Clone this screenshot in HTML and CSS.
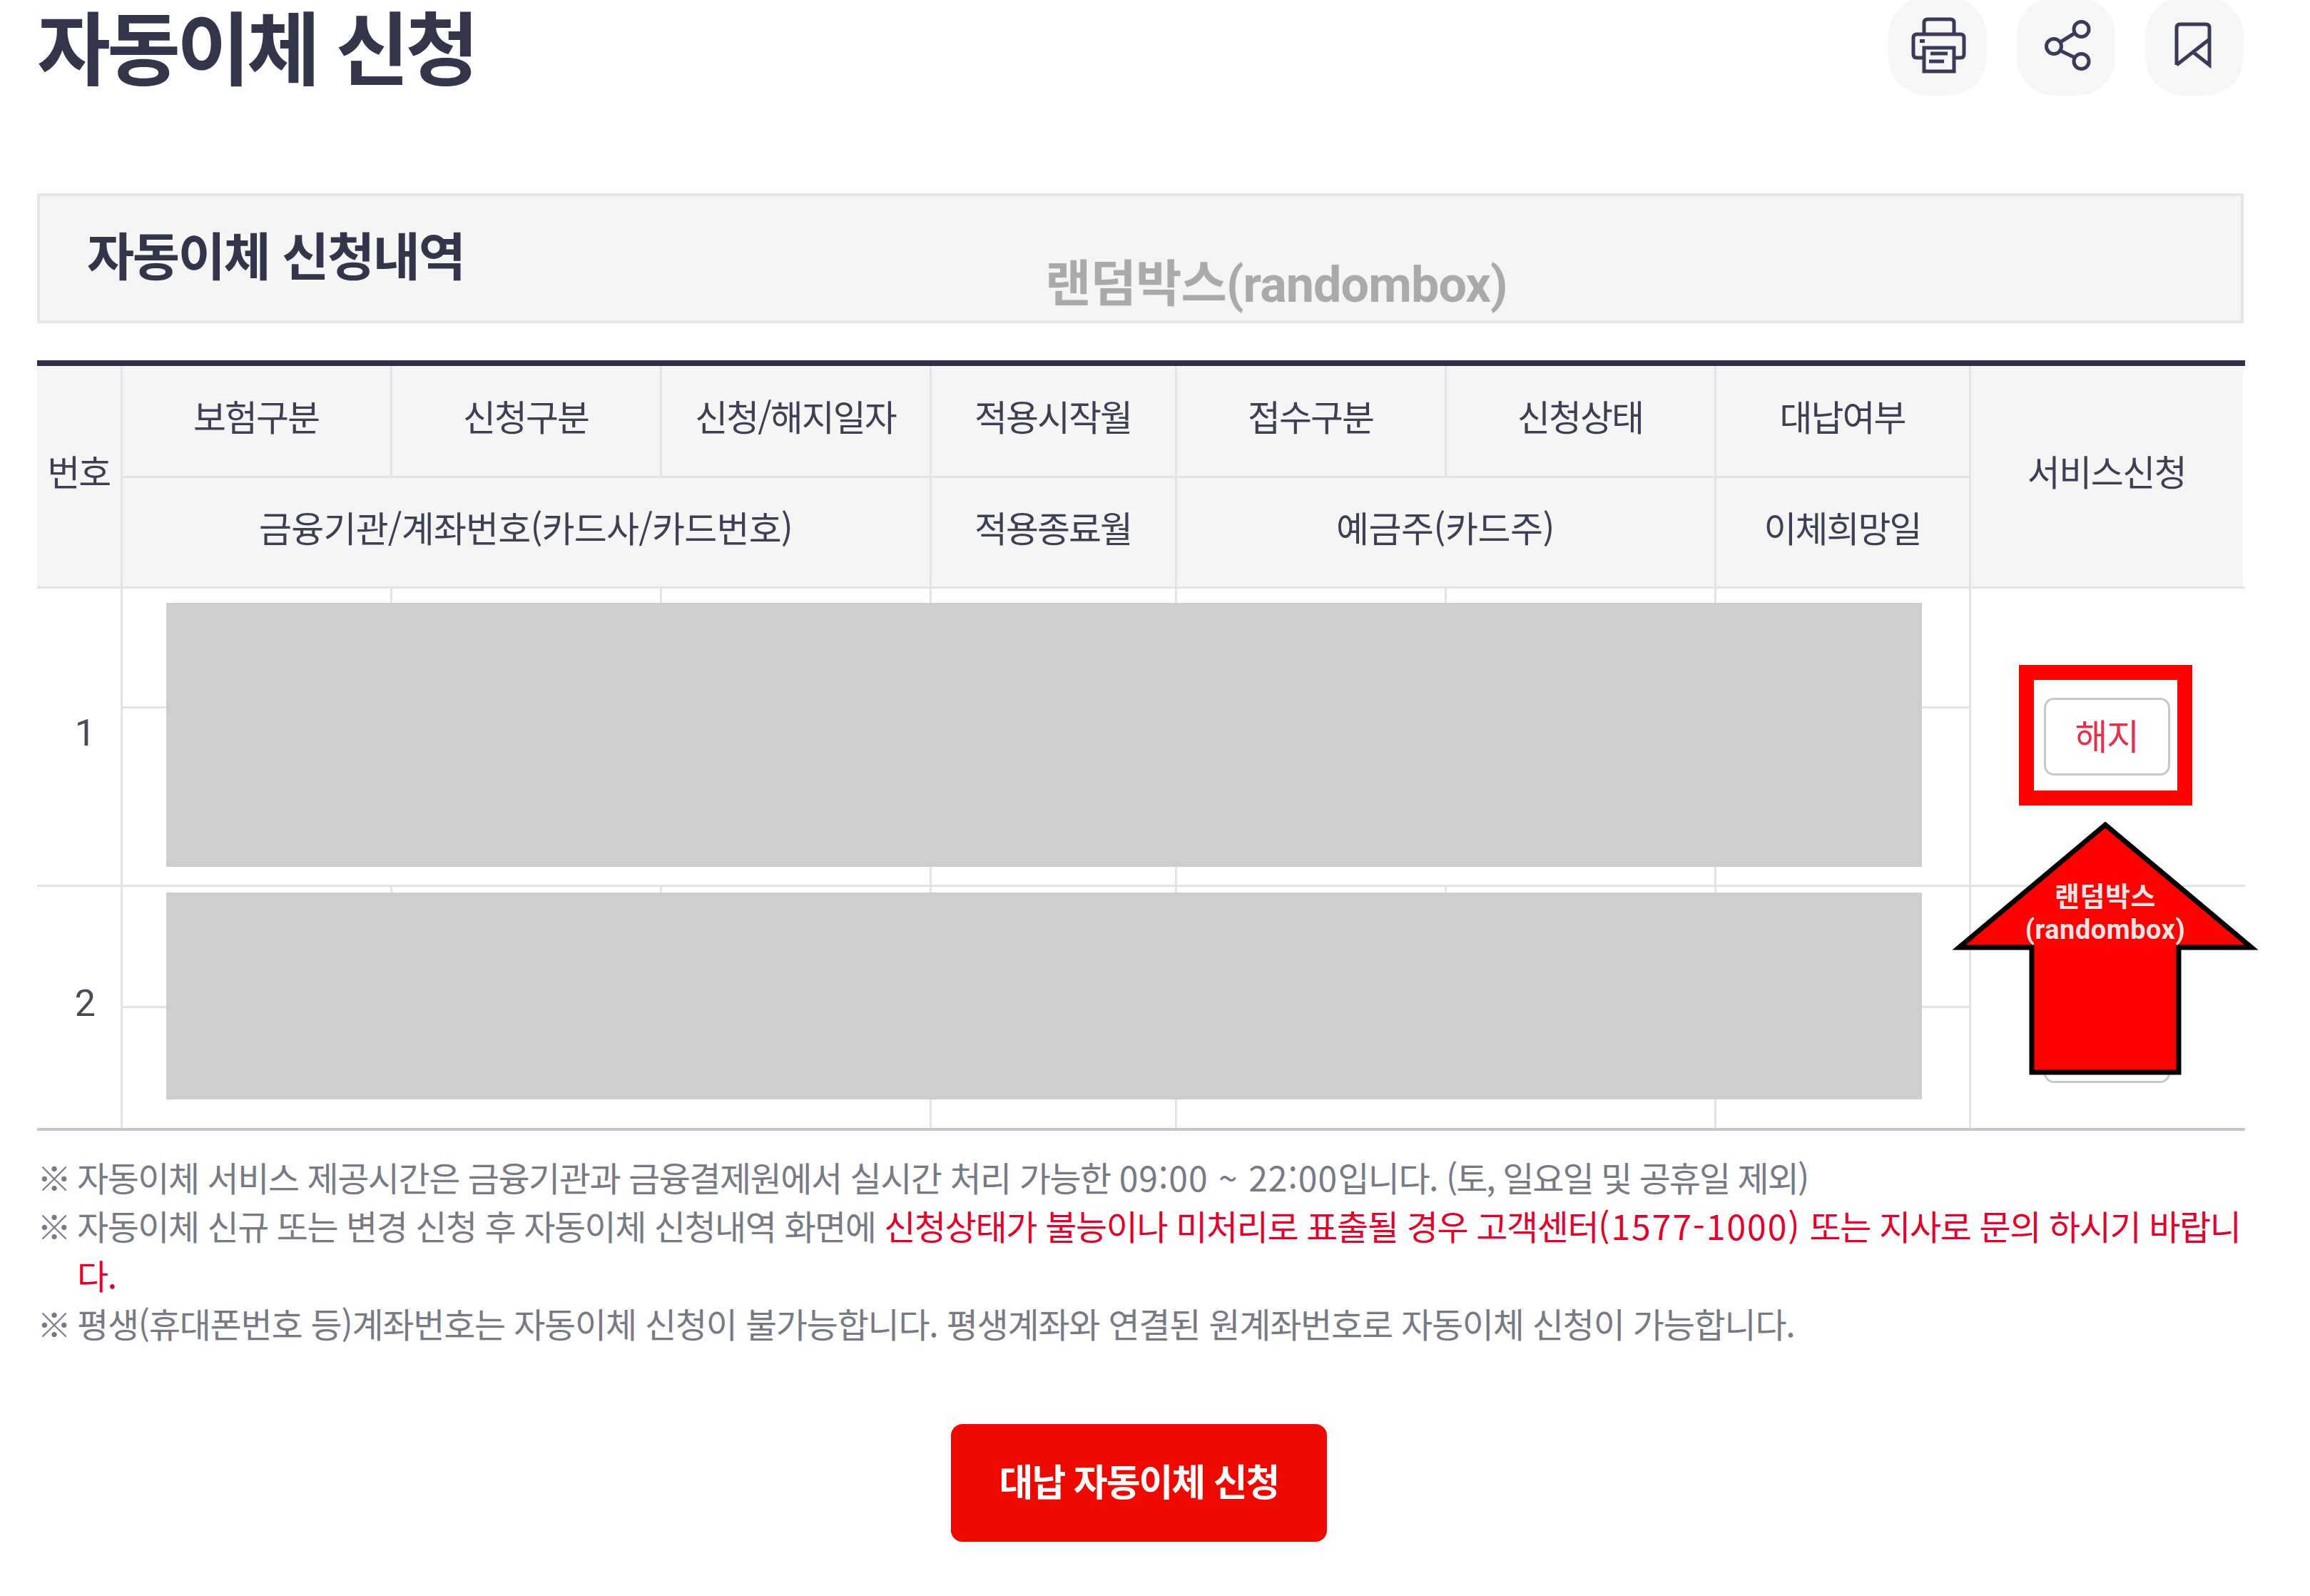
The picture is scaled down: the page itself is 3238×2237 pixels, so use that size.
FILE: index.html
```html
<!DOCTYPE html>
<html lang="ko">
<head>
<meta charset="utf-8">
<title>자동이체 신청</title>
<link rel="stylesheet" href="styles.css">
</head>
<body>
<main class="page">
  <header class="topbar">
    <h1 class="title">자동이체 신청</h1>
    <div class="tools">
      <button class="tool" aria-label="인쇄">
        <svg viewBox="-3 -3 138 138" class="ico">
          <path d="M47 47V33q0-5 5-5h32q5 0 5 5v14"/>
          <path d="M47 82H37q-5 0-5-5V54q0-5 5-5h61q5 0 5 5v23q0 5-5 5H89"/>
          <rect x="47" y="68" width="42" height="33"/>
          <path d="M56 76h24M54 87h21"/>
          <rect class="dot" x="41" y="56" width="7" height="5"/>
        </svg>
      </button>
      <button class="tool" aria-label="공유">
        <svg viewBox="-5 -2 138 138" class="ico">
          <circle cx="85.5" cy="43" r="10.5"/>
          <circle cx="47" cy="67" r="10.5"/>
          <circle cx="85.5" cy="88" r="10.5"/>
          <path d="M56 61l21-13M56 73l21 10"/>
        </svg>
      </button>
      <button class="tool" aria-label="즐겨찾기">
        <svg viewBox="-1 0 138 138" class="ico">
          <path d="M43 95V43q0-5 5-5h36q5 0 5 5v52L66 77"/>
          <path d="M43 95l46-36"/>
        </svg>
      </button>
    </div>
  </header>

  <section class="panel">
    <h2 class="panel-title">자동이체 신청내역</h2>
    <span class="mark">랜덤박스(randombox)</span>
  </section>

  <div class="table-wrap">
    <table class="grid">
      <colgroup>
        <col class="c-no"><col class="c-a"><col class="c-a"><col class="c-a"><col class="c-b"><col class="c-a"><col class="c-a"><col class="c-c"><col class="c-d">
      </colgroup>
      <thead>
        <tr class="h1">
          <th rowspan="2">번호</th>
          <th>보험구분</th><th>신청구분</th><th>신청/해지일자</th><th>적용시작월</th><th>접수구분</th><th>신청상태</th><th>대납여부</th>
          <th rowspan="2" class="last">서비스신청</th>
        </tr>
        <tr class="h2">
          <th colspan="3" class="wide">금융기관/계좌번호(카드사/카드번호)</th>
          <th>적용종료월</th>
          <th colspan="2" class="loose">예금주(카드주)</th>
          <th>이체희망일</th>
        </tr>
      </thead>
      <tbody>
        <tr class="r1a">
          <td rowspan="2" class="num">1</td>
          <td></td><td></td><td></td><td></td><td></td><td></td><td></td>
          <td rowspan="2" class="last"><button class="cancel">해지</button></td>
        </tr>
        <tr class="r1b">
          <td colspan="3"></td><td></td><td colspan="2"></td><td></td>
        </tr>
        <tr class="r2a">
          <td rowspan="2" class="num">2</td>
          <td></td><td></td><td></td><td></td><td></td><td></td><td></td>
          <td rowspan="2" class="last"><button class="cancel low">해지</button></td>
        </tr>
        <tr class="r2b">
          <td colspan="3"></td><td></td><td colspan="2"></td><td></td>
        </tr>
      </tbody>
    </table>
    <div class="mask mask-1"></div>
    <div class="mask mask-2"></div>
    <div class="focus"></div>
    <div class="arrow">
      <svg viewBox="0 0 434 372" class="arrow-shape"><path d="M217 16L422 188H320V363H114V188H12Z"/></svg>
      <p class="arrow-text">랜덤박스<br>(randombox)</p>
    </div>
  </div>

  <ul class="notes">
    <li><span class="ref">※</span><p>자동이체 서비스 제공시간은 금융기관과 금융결제원에서 실시간 처리 가능한 <span class="lat">09:00 ~ 22:00</span>입니다. <span class="tail">(토, 일요일 및 공휴일 제외)</span></p></li>
    <li><span class="ref">※</span><p>자동이체 신규 또는 변경 신청 후 자동이체 신청내역 화면에 <em>신청상태가 불능이나 미처리로 표출될 경우 고객센터<span class="tel">(1577-1000)</span> 또는 지사로 문의 하시기 바랍니<br>다.</em></p></li>
    <li class="snug"><span class="ref">※</span><p>평생(휴대폰번호 등)계좌번호는 자동이체 신청이 불가능합니다. 평생계좌와 연결된 원계좌번호로 자동이체 신청이 가능합니다.</p></li>
  </ul>

  <div class="actions"><button class="cta">대납 자동이체 신청</button></div>
</main>
</body>
</html>
```

FILE: styles.css
```css
* { box-sizing: border-box; }
html, body { margin: 0; padding: 0; background: #fff; }
body {
  width: 3238px;
  height: 2237px;
  overflow: hidden;
  font-family: "Noto Sans CJK KR", "Noto Sans", sans-serif;
  color: #3d3f55;
}
.page { padding: 0 93px 0 52px; }

.topbar { display: flex; justify-content: space-between; align-items: flex-start; height: 134px; }
.title { margin: 0; font-size: 112px; line-height: 124px; font-weight: 700; letter-spacing: -5px; color: #33354a; }
.tools { display: flex; gap: 42px; margin-top: -4px; }
.tool { width: 138px; height: 138px; padding: 0; border: 0; border-radius: 54px; background: #f6f6f6; }
.ico { display: block; width: 138px; height: 138px; fill: none; stroke: #3a3c57; stroke-width: 5; }
.ico .dot { fill: #3a3c57; stroke: none; }

.panel { position: relative; margin-top: 137px; height: 182px; padding: 0 66px; display: flex; align-items: center; background: #f5f5f5; border: 4px solid #e6e6e9; }
.panel-title { margin: 0 0 14px; font-size: 72px; line-height: 90px; font-weight: 700; letter-spacing: -2.4px; color: #33354a; }
.mark { position: absolute; left: 1409px; top: 79px; font-size: 70px; line-height: 90px; font-weight: 700; color: #aaa; white-space: nowrap; font-family: "Roboto", "Noto Sans CJK KR", sans-serif; letter-spacing: -0.9px; }

.table-wrap { position: relative; margin-top: 52px; }
.grid { width: 3093px; table-layout: fixed; border-collapse: collapse; border-top: 8px solid #30304a; }
.c-no { width: 118px; } .c-a { width: 378px; } .c-b { width: 344px; } .c-c { width: 357px; } .c-d { width: 384px; }
.grid th, .grid td { padding: 0; border: 3px solid #e4e4e8; text-align: center; vertical-align: middle; }
.grid tr > :first-child { border-left: 0; }
.grid .last { border-right: 3px solid #fff; }
.grid .h1 th { border-top: 0; height: 159px; }
.grid .h2 th { height: 155px; }
.grid th { padding-bottom: 16px; background: #f5f5f5; font-size: 50px; line-height: 60px; font-weight: 400; letter-spacing: -2px; color: #3d3f55; }
.grid .wide { letter-spacing: -0.8px; }
.grid .loose { letter-spacing: -0.5px; }
.grid .last { letter-spacing: -1.5px; }
.grid td { font-size: 50px; font-weight: 300; color: #555; background: #fff; }
.grid .num { padding: 0 0 10px 18px; font-family: "Roboto", sans-serif; font-size: 52px; letter-spacing: 0; font-weight: 400; color: #4a4a55; }
.r1a td { height: 168px; } .r1b td { height: 250px; }
.r2a td { height: 170px; } .r2b td { height: 172px; }
.grid .r2b td, .grid .r2a .num, .grid .r2a .last { border-bottom: 4px solid #c5c7d0; }

.cancel { display: block; width: 177px; height: 109px; margin: 0 auto; padding: 0 0 6px; background: #fff; border: 3px solid #c8c8cc; border-radius: 14px; color: #e6304a; font-family: inherit; font-size: 50px; letter-spacing: -1.5px; }
.cancel.low { margin-top: 103px; }

.mask { position: absolute; left: 181px; width: 2461px; background: #cfcdce; }
.mask-1 { top: 340px; height: 370px; }
.mask-2 { top: 746px; height: 290px; }
.focus { position: absolute; left: 2778px; top: 427px; width: 243px; height: 197px; border: 21px solid #f00; }
.arrow { position: absolute; left: 2682px; top: 635px; width: 434px; height: 372px; }
.arrow-shape { display: block; width: 434px; height: 372px; fill: #f00; stroke: #000; stroke-width: 7; }
.arrow-text { position: absolute; left: 0; right: 0; top: 94px; margin: 0; text-align: center; font-size: 38px; line-height: 46px; font-weight: 700; color: #e6e6e6; font-family: "Roboto", "Noto Sans CJK KR", sans-serif; letter-spacing: 0.5px; }

.notes { list-style: none; margin: 30px 0 0; padding: 0; color: #777a85; font-size: 48px; line-height: 68.3px; letter-spacing: -1.5px; }
.notes li { display: flex; }
.notes .ref { flex: 0 0 56px; }
.notes p { margin: 0; flex: 1; white-space: nowrap; }
.notes em { font-style: normal; color: #e4002b; letter-spacing: -1.4px; }
.notes .lat { letter-spacing: 1px; }
.notes .tail { letter-spacing: -2px; }
.notes .tel { letter-spacing: 2px; }
.notes .snug { letter-spacing: -1.25px; }

.actions { display: flex; justify-content: center; margin-top: 108px; padding-right: 4px; }
.cta { width: 527px; height: 165px; padding: 0 0 8px; border: 0; border-radius: 16px; background: #ee0900; color: #fff; font-family: inherit; font-size: 52px; font-weight: 700; letter-spacing: -2px; }
```
